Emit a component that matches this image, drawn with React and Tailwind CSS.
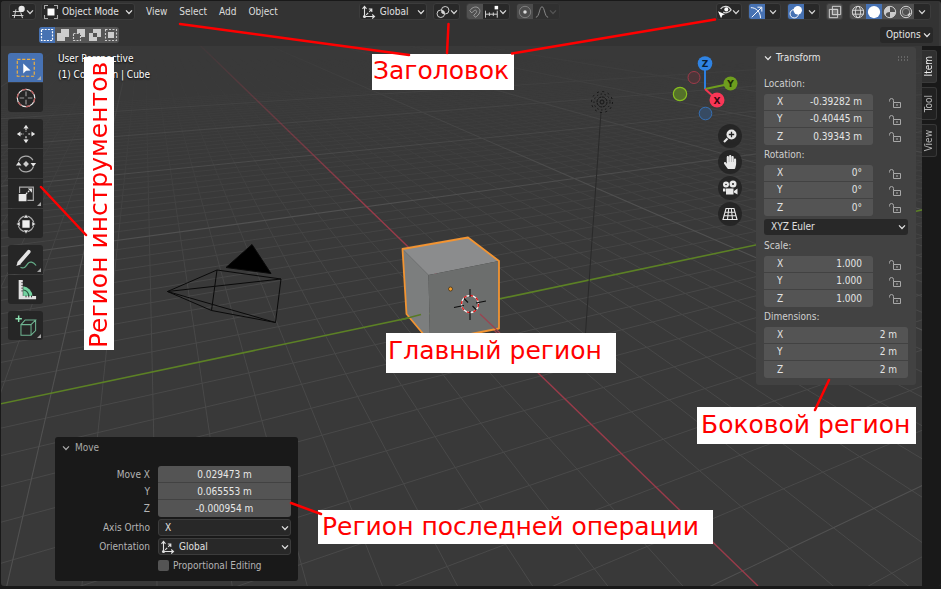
import React from "react";
import { FaHandPaper } from "react-icons/fa";

/* ---------- small shared pieces ---------- */

function Chevron({ className = "w-2 h-1.5" }) {
  return (
    <svg viewBox="0 0 8 6" className={`shrink-0 ${className}`} fill="none" stroke="currentColor" strokeWidth="1.2" aria-hidden="true">
      <path d="M1 1.3 4 4.5 7 1.3" />
    </svg>
  );
}

function Icon({ children, className = "size-4" }) {
  return (
    <svg viewBox="0 0 16 16" className={`shrink-0 ${className}`} fill="none" stroke="currentColor" strokeWidth="1.1" aria-hidden="true">
      {children}
    </svg>
  );
}

const AxesIcon = () => (
  <Icon>
    <path d="M3.5 3v9.500H13" />
    <path d="M1.500 4.800 3.500 2.400l2 2.400M11.200 10.500l2.300 2-2.300 2" />
    <path d="M5.200 10.800l2-2M8.200 7.800l2.300-2.300M7.800 5h3v3" />
    <circle cx="3.500" cy="12.500" r="1.500" fill="currentColor" stroke="none" />
  </Icon>
);

const ObjectModeIcon = () => (
  <Icon>
    <rect x="4.500" y="4.500" width="7" height="7" fill="#fff" stroke="none" />
    <path d="M1.500 5V1.500H5M11 1.500h3.500V5M14.500 11v3.500H11M5 14.500H1.500V11" stroke="#aaa" />
  </Icon>
);

const LockIcon = () => (
  <svg viewBox="0 0 12 10" className="h-2.5 w-3" fill="none" stroke="#a8a8a8" strokeWidth="1" aria-hidden="true">
    <path d="M.5 3.500v-1a2 2 0 0 1 4 0v2" />
    <path d="M4.500 4.500h7v5h-7z" />
    <path d="M8 6v2" />
  </svg>
);

function Dropdown({ label, value, icon, className = "" }) {
  return (
    <div className={`relative flex items-center rounded-[3px] border border-[#3c3c3c] bg-[#282828] text-[#e0e0e0] ${className}`}>
      {icon && <span className="pointer-events-none absolute left-px">{icon}</span>}
      <select aria-label={label} defaultValue={value} className={`h-full w-full appearance-none bg-transparent outline-none ${icon ? "pl-5" : "pl-1.5"}`}>
        <option>{value}</option>
      </select>
      <Chevron className="pointer-events-none absolute right-px h-1.5 w-2" />
    </div>
  );
}

const headerButton = "flex h-full items-center justify-center";
const headerGroup = "flex h-[17px] items-center overflow-hidden rounded-[3px] border border-[#3c3c3c] bg-[#282828] text-[#d6d6d6]";

/* ---------- 3D scene ---------- */

const ROWS = Array.from({ length: 90 }, (_, n) => n - 45);

function project(vx, base, step, n, y) {
  const x = base + step * n;
  return vx + ((x - vx) * (y + 9)) / 594;
}

function GridLines({ major }) {
  return ROWS.filter((n) => n !== 0 && (n % 10 === 0) === major).map((n) => (
    <g key={n}>
      <line x1={project(144, 757, 75, n, 20)} y1="20" x2={project(144, 757, 75, n, 600)} y2="600" />
      <line x1={project(1962, -860, 157.3, n, 20)} y1="20" x2={project(1962, -860, 157.3, n, 600)} y2="600" />
    </g>
  ));
}

function Scene() {
  return (
    <svg viewBox="1 1 940 585" preserveAspectRatio="xMidYMid slice" className="absolute inset-0 size-full" aria-hidden="true">
      <defs>
        <linearGradient id="nearFade" x1="0" y1="0" x2="0" y2="1">
          <stop offset="0.1" stopColor="#fff" stopOpacity="0" />
          <stop offset="0.5" stopColor="#fff" stopOpacity="0.9" />
          <stop offset="1" stopColor="#fff" />
        </linearGradient>
        <linearGradient id="farFade" x1="0" y1="0" x2="0" y2="1">
          <stop offset="0.06" stopColor="#fff" stopOpacity="0" />
          <stop offset="0.35" stopColor="#fff" />
        </linearGradient>
        <mask id="nearMask" maskUnits="userSpaceOnUse" x="0" y="0" width="941" height="589">
          <rect width="941" height="589" fill="url(#nearFade)" />
        </mask>
        <mask id="farMask" maskUnits="userSpaceOnUse" x="0" y="0" width="941" height="589">
          <rect width="941" height="589" fill="url(#farFade)" />
        </mask>
      </defs>
      <g mask="url(#nearMask)" stroke="#4a4a4a" strokeWidth="1"><GridLines major={false} /></g>
      <g mask="url(#farMask)" stroke="#515151" strokeWidth="1.100"><GridLines major /></g>
      <g mask="url(#farMask)">
        <line x1="174" y1="20" x2="758" y2="586" stroke="#9a3b4a" strokeWidth="1.400" />
        <line x1="0" y1="404" x2="941" y2="206" stroke="#5c8125" strokeWidth="1.600" />
      </g>

      {/* light */}
      <g fill="none" stroke="#161616">
        <path d="M601 112 585 340" stroke="#2a2a2a" />
        <circle cx="602" cy="102" r="2" />
        <circle cx="602" cy="102" r="5" strokeDasharray="3 .8" />
        <circle cx="602" cy="102" r="8" strokeDasharray="1.500 2.500" />
        <circle cx="602" cy="102" r="10.500" strokeDasharray="2 3.500" />
      </g>

      {/* camera */}
      <g stroke="#0a0a0a" fill="none">
        <path d="M167.500 291.500 217 270l64 9-5.500 43.500-64-12zM167.500 291.500l113.500-12.500M167.500 291.500l108 31M217 270l-5.500 40.500" />
        <path d="M252 244.500 226 267.500l45 6z" fill="#000" />
      </g>

      {/* cube */}
      <path d="M402.500 249 468 237.500 499 261 428.500 275z" fill="#8b8c8d" />
      <path d="M402.500 249 428.500 275 430 342 406.500 314z" fill="#7c7e7e" />
      <path d="M428.500 275 499 261v67.500L430 342z" fill="#6c6e6d" />
      <path d="M402.500 249 468 237.500 499 261v67.500L430 342 406.500 314z" fill="none" stroke="#f29432" strokeWidth="1.800" strokeLinejoin="round" />
      <path d="M400 320 421 314.500" stroke="#587a26" strokeWidth="1.400" />
      <path d="M480 314 500 333" stroke="#9a4450" strokeWidth="1.300" />
      <circle cx="450.500" cy="289" r="2" fill="#f9a02c" stroke="#3a2a10" strokeWidth=".7" />

      {/* 3D cursor */}
      <circle cx="470" cy="304" r="8.500" fill="none" stroke="#f4f4f4" strokeWidth="1.300" />
      <circle cx="470" cy="304" r="8.500" fill="none" stroke="#e01818" strokeWidth="1.300" strokeDasharray="3.300 3.300" />
      <path d="M470 289v8M470 311v9M476 303l10-2M454 307.500l10-2M464 298.500l4 4M472.500 306l4 4" stroke="#0d0d0d" strokeWidth="1.100" />
    </svg>
  );
}

/* ---------- header ---------- */

function Header() {
  return (
    <header className="relative mr-0.5 bg-[#323232]/80 pt-0.5 pb-[3px]">
      <div className="flex items-center">
        <button aria-label="Editor type" className={`${headerGroup} ml-2 w-[27px] justify-between pr-px pl-0.5`}>
          <Icon className="size-[14px]">
            <path d="M1 7.500h10M0 12h13M4.500 5 2.500 15M10 8.500l2 6.500" />
            <circle cx="11" cy="4.500" r="3.600" fill="#e8e8e8" stroke="none" />
          </Icon>
          <Chevron />
        </button>
        <Dropdown label="Mode" value="Object Mode" icon={<ObjectModeIcon />} className="ml-[5px] h-[17px] w-[94px]" />
        <nav className="ml-[11px] flex gap-3 text-[#dcdcdc]">
          <button>View</button>
          <button>Select</button>
          <button>Add</button>
          <button>Object</button>
        </nav>

        <div className="ml-[81px] flex gap-1.5">
          <Dropdown label="Transform orientation" value="Global" icon={<AxesIcon />} className="h-[17px] w-[68px]" />
          <button aria-label="Pivot point" className={`${headerGroup} w-[27px] justify-between pr-px pl-0.5`}>
            <Icon className="size-[14px]">
              <circle cx="5.500" cy="10" r="4.300" />
              <circle cx="10.500" cy="6" r="4.300" />
              <circle cx="8" cy="8.200" r="1.700" fill="currentColor" stroke="none" />
            </Icon>
            <Chevron />
          </button>
          <div className={`${headerGroup} w-[44px]`}>
            <button aria-label="Snap" className={`${headerButton} w-4 bg-[#505050] text-[#a0a0a0]`}>
              <Icon className="size-[14px]">
                <path d="M2 6.500C5 2 10 1 12.500 4s.5 7-4 10l-2-2.300c3-2.200 4-4 3-5.200S7 6 4.300 9z" />
              </Icon>
            </button>
            <button aria-label="Snap to" className={`${headerButton} grow justify-between pr-px pl-0.5`}>
              <Icon className="size-[14px]">
                <path d="M.5 6.500v8M5 8.500v4M9.500 8.500v4M14 6.500v8M.5 10.500H14" />
                <rect x="11" y="1" width="4" height="4" fill="#fff" stroke="none" />
              </Icon>
              <Chevron />
            </button>
          </div>
          <div className={`${headerGroup} w-[44px] border-[#363636] bg-[#303030]`}>
            <button aria-label="Proportional editing" className={`${headerButton} w-4 bg-[#4c4c4c]`}>
              <Icon className="size-[14px]">
                <circle cx="8" cy="8" r="6.500" stroke="#808080" />
                <circle cx="8" cy="8" r="2" fill="#ddd" stroke="none" />
              </Icon>
            </button>
            <button aria-label="Falloff" className={`${headerButton} grow justify-between pr-px pl-0.5 text-[#8a8a8a]`}>
              <Icon className="size-[14px]">
                <path d="M1 14c4 0 4-12 7-12s3 12 7 12" />
              </Icon>
              <Chevron className="h-1.5 w-2 opacity-40" />
            </button>
          </div>
        </div>

        <div className="mr-2 ml-auto flex items-center gap-1.5">
          <button aria-label="Visibility" className={`${headerGroup} w-[26px] justify-between pr-px pl-px`}>
            <Icon className="size-[14px]">
              <path d="M3 4.500C6 .5 12 .5 15 5.500 12 9.500 8 9.500 6 8" strokeWidth="1.400" />
              <circle cx="9.500" cy="5" r="2.300" fill="#fff" stroke="none" />
              <path d="M0 7l8 3.500-3 1.200L3.500 15z" fill="#fff" stroke="none" />
            </Icon>
            <Chevron />
          </button>
          <div className={`${headerGroup} w-[33px]`}>
            <button aria-label="Gizmos" className={`${headerButton} w-4 bg-[#4772b3] text-white`}>
              <Icon className="size-[14px]">
                <path d="M2 14 13 3M8.500 2.500H13.500v5" />
                <path d="M1 3c6 0 11 5 11 12" />
              </Icon>
            </button>
            <button aria-label="Gizmo options" className={`${headerButton} grow`}><Chevron /></button>
          </div>
          <div className={`${headerGroup} w-[33px]`}>
            <button aria-label="Overlays" className={`${headerButton} w-4 bg-[#4772b3] text-white`}>
              <Icon className="size-[14px]">
                <circle cx="10" cy="6" r="4.800" fill="#fff" stroke="none" />
                <circle cx="6" cy="10" r="4.800" />
              </Icon>
            </button>
            <button aria-label="Overlay options" className={`${headerButton} grow`}><Chevron /></button>
          </div>
          <button aria-label="X-ray" className={`${headerGroup} w-[17px] justify-center bg-[#505050]`}>
            <Icon className="size-[14px]">
              <path d="M5 1.500h9.500V11H5zM1.500 5H11v9.500H1.500z" />
              <path d="M5 5h6v6H5z" fill="#777" />
            </Icon>
          </button>
          <div className={`${headerGroup} w-[82px]`}>
            <button aria-label="Wireframe" className={`${headerButton} w-4 bg-[#505050]`}>
              <Icon className="size-[14px]">
                <circle cx="8" cy="8" r="6.500" />
                <ellipse cx="8" cy="8" rx="3" ry="6.500" />
                <path d="M1.500 6h13M1.500 10.500h13" />
              </Icon>
            </button>
            <button aria-label="Solid" className={`${headerButton} w-4 bg-[#4772b3]`}>
              <Icon className="size-[14px]"><circle cx="8" cy="8" r="7" fill="#fff" stroke="none" /></Icon>
            </button>
            <button aria-label="Material preview" className={`${headerButton} w-4 bg-[#505050]`}>
              <Icon className="size-[14px]">
                <circle cx="8" cy="8" r="6.500" />
                <path d="M8 1.500A6.500 6.500 0 0 0 3 12.200C3 9 5 8 8 8zM8 8h6.500A6.500 6.500 0 0 1 8 14.500z" fill="#ccc" stroke="none" />
              </Icon>
            </button>
            <button aria-label="Rendered" className={`${headerButton} w-4 bg-[#505050]`}>
              <Icon className="size-[14px]">
                <circle cx="8" cy="8" r="6.500" />
                <circle cx="8" cy="8" r="4.200" stroke="#999" />
                <path d="M10 12c1.500-.7 2.300-1.800 2.500-3" strokeWidth="1.800" />
              </Icon>
            </button>
            <button aria-label="Shading options" className={`${headerButton} grow`}><Chevron /></button>
          </div>
        </div>
      </div>

      <div className="mt-[7px] flex h-4 items-center">
        <div className="ml-[38px] flex h-full overflow-hidden rounded-[3px] bg-[#555] text-[#ccc]">
          <button aria-label="Set selection" className={`${headerButton} w-4 bg-[#4772b3]`}>
            <Icon><path d="M2.500 2.500h11v11h-11z" stroke="#fff" strokeWidth="1.200" strokeDasharray="2 1.200" /></Icon>
          </button>
          <button aria-label="Extend selection" className={`${headerButton} w-4`}>
            <Icon><path d="M6 2h8v8h-4v4H2V6h4z" fill="#ccc" stroke="none" /></Icon>
          </button>
          <button aria-label="Subtract selection" className={`${headerButton} w-4`}>
            <Icon><path d="M6 2h8v8h-4V6H6z" fill="#ccc" stroke="none" /><path d="M2.500 6.500h7v7h-7z" strokeDasharray="2 1.200" /></Icon>
          </button>
          <button aria-label="Difference selection" className={`${headerButton} w-4`}>
            <Icon><path d="M6 2h8v8h-4v4H2V6h4zM6 6v4h4V6z" fill="#ccc" fillRule="evenodd" stroke="none" /></Icon>
          </button>
          <button aria-label="Intersect selection" className={`${headerButton} w-4`}>
            <Icon><path d="M5 5h6v6H5z" fill="#ccc" stroke="none" /><path d="M2.500 2.500h11v11h-11z" strokeDasharray="2 1.500" /></Icon>
          </button>
        </div>
        <button className="mr-1.5 ml-auto flex h-full w-[53px] items-center justify-between rounded-[3px] bg-[#282828] pr-0.5 pl-1.5 text-[#e6e6e6]">
          Options <Chevron />
        </button>
      </div>
    </header>
  );
}

/* ---------- toolbar ---------- */

function Tool({ name, active, more, children }) {
  return (
    <button aria-label={name} className={`relative flex h-[29px] w-full items-center justify-center ${active ? "bg-[#4772b3]" : "bg-[#262626]"}`}>
      <svg viewBox="0 0 24 24" className="size-[22px]" fill="none" stroke="#e4e4e4" strokeWidth="1.300" aria-hidden="true">{children}</svg>
      {more && (
        <svg viewBox="0 0 4 4" className="absolute right-[2px] bottom-[2px] size-1" fill="#a5a5a5" aria-hidden="true"><path d="M4 0v4H0z" /></svg>
      )}
    </button>
  );
}

function ToolGroup({ children }) {
  return <div className="flex flex-col gap-px overflow-hidden rounded-[3px]">{children}</div>;
}

function Toolbar() {
  return (
    <div role="toolbar" aria-label="Tools" className="ml-[7px] flex w-[35px] shrink-0 flex-col gap-[7px] pt-[7px]">
      <ToolGroup>
        <Tool name="Select Box" active more>
          <path d="M2.500 2.500h18.500v18.500H2.500z" stroke="#f0b040" strokeDasharray="3.500 1.800" />
          <path d="M9 7v11l3-3 5-.3z" fill="#fff" stroke="none" />
        </Tool>
        <Tool name="Cursor">
          <circle cx="12" cy="12" r="9.500" />
          <circle cx="12" cy="12" r="9.500" stroke="#b85a5a" strokeDasharray="5 5" />
          <path d="M12 5v5M12 14v5M5 12h5M14 12h5" stroke="#999" />
        </Tool>
      </ToolGroup>
      <ToolGroup>
        <Tool name="Move">
          <g fill="#e4e4e4" stroke="none">
            <path d="M12 2l2.800 4H9.200zM12 22l2.800-4H9.200zM2 12l4-2.800v5.600zM22 12l-4-2.800v5.600z" />
          </g>
          <path d="M12 6v3.500M12 14.500V18M6 12h3.500M14.500 12H18" strokeDasharray="2 1" />
        </Tool>
        <Tool name="Rotate">
          <path d="M4 9a8.500 8.500 0 0 1 15.500-1M20 15a8.500 8.500 0 0 1-15.500 1" stroke="#aaa" />
          <path d="M12 8.800 15.200 12 12 15.200 8.800 12z" fill="#ccc" stroke="none" />
          <path d="M17 11h6l-3 4zM1 13.500h6L4 9.500z" fill="#e4e4e4" stroke="none" />
        </Tool>
        <Tool name="Scale" more>
          <path d="M5 11V4.500h15V19h-6.500" stroke="#aaa" />
          <path d="M4 12h8.500v8H4z" fill="#e8e8e8" stroke="none" />
          <path d="M12 12l4-4" strokeDasharray="2 1" />
          <path d="M14 6h4.500v4.500z" fill="#e4e4e4" stroke="none" />
        </Tool>
        <Tool name="Transform">
          <circle cx="12" cy="12" r="8.500" stroke="#aaa" />
          <path d="M8 8h8v8H8z" fill="#f0f0f0" stroke="none" />
          <path d="M12 1.500l2.800 4H9.200zM12 22.500l2.800-4H9.200zM1.500 12l4-2.800v5.600zM22.500 12l-4-2.800v5.600z" fill="#e4e4e4" stroke="#262626" strokeWidth=".5" />
        </Tool>
      </ToolGroup>
      <ToolGroup>
        <Tool name="Annotate" more>
          <path d="M5 14.500 15 3" strokeWidth="4" strokeLinecap="round" />
          <path d="M1.500 18.500l1.500-5 3.500 3z" fill="#e4e4e4" stroke="none" />
          <path d="M6 20c4 2 6-1 8-4s6-2 9 2" stroke="#66b08a" />
        </Tool>
        <Tool name="Measure">
          <path d="M9 8a11 11 0 0 1 10 10.500H9z" fill="#73d2a0" stroke="none" />
          <path d="M4 1h4.500v17.500H23V22H4z" fill="#e0e0e0" stroke="none" />
          <path d="M9 12a6.500 6.500 0 0 1 6 6.500" stroke="#2b5a42" />
          <path d="M7 4h1.500M7 7h1.500M7 10h1.500M7 13h1.500M12 18v2M15 18v2M18 18v2" stroke="#262626" strokeWidth="1" />
        </Tool>
      </ToolGroup>
      <ToolGroup>
        <Tool name="Add Cube" more>
          <path d="M6.500 10.500h11V22h-11zM6.500 10.500 11 5.500h11.500l-5 5M22.500 5.500V17l-5 5" stroke="#6fb592" strokeWidth="1.100" />
          <path d="M4 .5v7M.5 4h7" stroke="#8be0b0" strokeWidth="1.600" />
        </Tool>
      </ToolGroup>
    </div>
  );
}

/* ---------- operator panel ---------- */

function StackField({ label, value }) {
  return <input aria-label={label} defaultValue={value} className="h-[17px] w-full border-b border-[#424242] bg-[#545454] text-center text-[#e8e8e8] outline-none last:border-b-0" />;
}

function OperatorPanel() {
  return (
    <section aria-label="Move" className="mt-auto mb-[5px] ml-3 w-[243px] rounded-[3px] bg-[#191919] pt-1 pr-[7px] pb-[7px] text-[#b4b4b4]">
      <button className="flex h-[14px] items-center gap-1 pl-1.5 text-[#a8a8a8]">
        <Chevron className="h-1.5 w-2.5" /> Move
      </button>
      <div className="mt-[11px] grid grid-cols-[95px_1fr] gap-x-2 gap-y-0.5 text-right">
        <div className="leading-[17px]">
          <div>Move X</div>
          <div>Y</div>
          <div>Z</div>
        </div>
        <div className="flex flex-col overflow-hidden rounded-[3px]">
          <StackField label="Move X" value="0.029473 m" />
          <StackField label="Move Y" value="0.065553 m" />
          <StackField label="Move Z" value="-0.000954 m" />
        </div>
        <div className="leading-[17px]">Axis Ortho</div>
        <Dropdown label="Axis Ortho" value="X" className="h-[17px]" />
        <div className="leading-[17px]">Orientation</div>
        <Dropdown label="Orientation" value="Global" icon={<AxesIcon />} className="h-[17px]" />
        <label className="col-start-2 flex h-[17px] items-center gap-1">
          <input type="checkbox" className="size-[11px] appearance-none rounded-[2px] bg-[#545454]" />
          Proportional Editing
        </label>
      </div>
    </section>
  );
}

/* ---------- navigation gizmo ---------- */

function NavButton({ label, children }) {
  return (
    <button aria-label={label} className="flex size-6 items-center justify-center rounded-full bg-[#232323]/90 text-[#e8e8e8]">
      {children}
    </button>
  );
}

function Navigation() {
  return (
    <div className="flex shrink-0 flex-col items-end gap-0.5 pt-2 pr-[14px]">
      <svg viewBox="672 54 70 68" className="h-[68px] w-[70px]" fontFamily="DejaVu Sans, sans-serif" fontSize="9" fontWeight="bold" textAnchor="middle" role="img" aria-label="View orientation">
        <path d="M705 89V66" stroke="#2c7fe0" strokeWidth="2" />
        <path d="M705 89l24-5" stroke="#6e9e1e" strokeWidth="2" />
        <path d="M705 89l10 9" stroke="#f33650" strokeWidth="2" />
        <circle cx="694" cy="77.500" r="6" fill="#4c3639" stroke="#a03a4a" />
        <circle cx="680" cy="94" r="6.700" fill="#55712a" stroke="#86bd20" strokeWidth="1.200" />
        <circle cx="705.500" cy="113.500" r="6.300" fill="#374b63" stroke="#3670b4" />
        <circle cx="705" cy="63.500" r="7.300" fill="#2f83e3" />
        <circle cx="730.500" cy="83.500" r="7" fill="#6e9e1e" />
        <circle cx="717" cy="100" r="7.500" fill="#fa3656" />
        <text x="705" y="67" fill="#0a1d33">Z</text>
        <text x="730.500" y="87" fill="#1c2a05">Y</text>
        <text x="717" y="103.500" fill="#3a0610">X</text>
      </svg>
      <NavButton label="Zoom">
        <Icon>
          <circle cx="9.500" cy="6.500" r="5" fill="#e8e8e8" stroke="none" />
          <path d="M5.500 10.500 2 14" strokeWidth="2.200" />
          <path d="M9.500 3.800v5.400M6.800 6.500h5.400" stroke="#222" strokeWidth="1.300" />
        </Icon>
      </NavButton>
      <NavButton label="Pan"><FaHandPaper className="size-[14px]" /></NavButton>
      <NavButton label="Camera view">
        <Icon>
          <g fill="currentColor" stroke="none">
            <circle cx="4" cy="4.500" r="3" />
            <circle cx="11" cy="4" r="3.500" />
            <path d="M4 8.500h7.500v6H4zM12 11l3.500-2.500v6L12 12.500zM1 8.500h2.500v3H1z" />
          </g>
          <circle cx="11" cy="4" r="1" fill="#222" stroke="none" />
          <circle cx="4" cy="4.500" r=".8" fill="#222" stroke="none" />
        </Icon>
      </NavButton>
      <NavButton label="Toggle perspective">
        <Icon>
          <path d="M4 2.500h8l3 11H1zM3 6.200h10M2 9.700h12M6.700 2.500 5.500 13.500M9.300 2.500l1.200 11" />
        </Icon>
      </NavButton>
    </div>
  );
}

/* ---------- sidebar ---------- */

function AxisField({ group, axis, value }) {
  return (
    <label className="flex h-[17px] min-w-0 items-center border-b border-[#424242] bg-[#545454] pr-[11px] pl-[13px] text-[#e4e4e4] last:border-b-0">
      <span>{axis}</span>
      <input aria-label={`${group} ${axis}`} defaultValue={value} className="w-0 min-w-0 flex-1 bg-transparent text-right outline-none" />
    </label>
  );
}

function AxisGroup({ title, values, locks = true }) {
  return (
    <div role="group" aria-label={title}>
      <h3 className="h-5 leading-5 text-[#cfcfcf]">{title}:</h3>
      <div className="flex gap-4">
        <div className="flex min-w-0 flex-1 flex-col overflow-hidden rounded-[3px]">
          {["X", "Y", "Z"].map((axis, i) => <AxisField key={axis} group={title} axis={axis} value={values[i]} />)}
        </div>
        {locks && (
          <div className="flex w-[19px] shrink-0 flex-col">
            {["X", "Y", "Z"].map((axis) => (
              <button key={axis} aria-label={`Lock ${title} ${axis}`} className="flex h-[17px] items-center"><LockIcon /></button>
            ))}
          </div>
        )}
      </div>
    </div>
  );
}

function Sidebar() {
  return (
    <aside className="mt-px mr-1.5 w-40 shrink-0 self-start rounded-[3px] bg-[#424242] px-2 pb-[7px]">
      <div className="flex h-[22px] items-center justify-between">
        <button className="flex items-center gap-1 text-[#e6e6e6]"><Chevron /> Transform</button>
        <svg viewBox="0 0 10 5" className="h-[5px] w-2.5" stroke="#8a8a8a" strokeDasharray="1 2" aria-hidden="true"><path d="M0 1h10M0 4h10" /></svg>
      </div>
      <div className="pt-[5px]">
        <AxisGroup title="Location" values={["-0.39282 m", "-0.40445 m", "0.39343 m"]} />
        <AxisGroup title="Rotation" values={["0°", "0°", "0°"]} />
        <Dropdown label="Rotation mode" value="XYZ Euler" className="mt-[3px] mb-px h-4 border-transparent" />
        <AxisGroup title="Scale" values={["1.000", "1.000", "1.000"]} />
        <AxisGroup title="Dimensions" values={["2 m", "2 m", "2 m"]} locks={false} />
      </div>
    </aside>
  );
}

function Tab({ name, active }) {
  return (
    <button
      role="tab"
      aria-selected={!!active}
      className={`flex h-[33px] w-[15px] shrink-0 items-center justify-center rounded-r-[3px] border border-l-0 ${active ? "border-[#3a3a3a] bg-[#303030] text-[#efefef]" : "border-[#383838] bg-[#212121] text-[#b5b5b5]"}`}
    >
      <span className="rotate-180 [writing-mode:vertical-rl]">{name}</span>
    </button>
  );
}

function Tabs() {
  return (
    <div role="tablist" aria-label="Sidebar tabs" className="flex w-[19px] shrink-0 flex-col gap-1 bg-[#191919] pt-1">
      <Tab name="Item" active />
      <Tab name="Tool" />
      <Tab name="View" />
    </div>
  );
}

/* ---------- callouts ---------- */

function Callout({ className, children }) {
  return <div className={`absolute whitespace-nowrap bg-white font-['DejaVu_Sans',sans-serif] text-[25px] text-[#ff0000] ${className}`}>{children}</div>;
}

function Callouts() {
  return (
    <div className="pointer-events-none absolute top-0 left-0">
      <Callout className="top-[54px] left-[372px] h-9 w-[142px] pl-px leading-[34px]">Заголовок</Callout>
      <Callout className="top-[333px] left-[386px] h-10 w-[230px] pl-0.5 leading-[36px]">Главный регион</Callout>
      <Callout className="top-[407px] left-[697px] h-[37px] w-[219px] pl-1 leading-[36px]">Боковой регион</Callout>
      <Callout className="top-[510px] left-[318px] h-[34px] w-[395px] pl-1 leading-[34px]">Регион последней операции</Callout>
      <Callout className="top-[57px] left-[84px] h-[293px] w-[30px] rotate-180 pt-0.5 leading-[30px] [writing-mode:vertical-rl]">Регион инструментов</Callout>
      <svg viewBox="0 0 941 589" className="absolute top-0 left-0 h-[589px] w-[941px] max-w-none" fill="none" stroke="#f00" strokeWidth="2.500" strokeLinecap="round" aria-hidden="true">
        <path d="M180 24 409 55M448.500 24 447 53M512 53.500 715 19.500M41 187l45 48M829 380l-14 30M291 503l30 11" />
      </svg>
    </div>
  );
}

export default function App() {
  return (
    <div className="relative flex min-h-screen flex-col overflow-hidden bg-[#191919] pt-px pb-[3px] pl-px font-['DejaVu_Sans_Condensed','DejaVu_Sans',sans-serif] text-[10px] leading-[14px]">
      <main className="relative flex grow flex-col overflow-hidden rounded-[3px] bg-[#393939]">
        <Scene />
        <Header />
        <div className="relative flex grow">
          <Toolbar />
          <div className="flex min-w-0 flex-1 flex-col">
            <div className="pt-[5px] pl-[15px] leading-4 text-white [text-shadow:0_1px_2px_#000]">
              <p>User Perspective</p>
              <p>(1) Collection | Cube</p>
            </div>
            <OperatorPanel />
          </div>
          <Navigation />
          <Sidebar />
          <Tabs />
        </div>
      </main>
      <Callouts />
    </div>
  );
}
